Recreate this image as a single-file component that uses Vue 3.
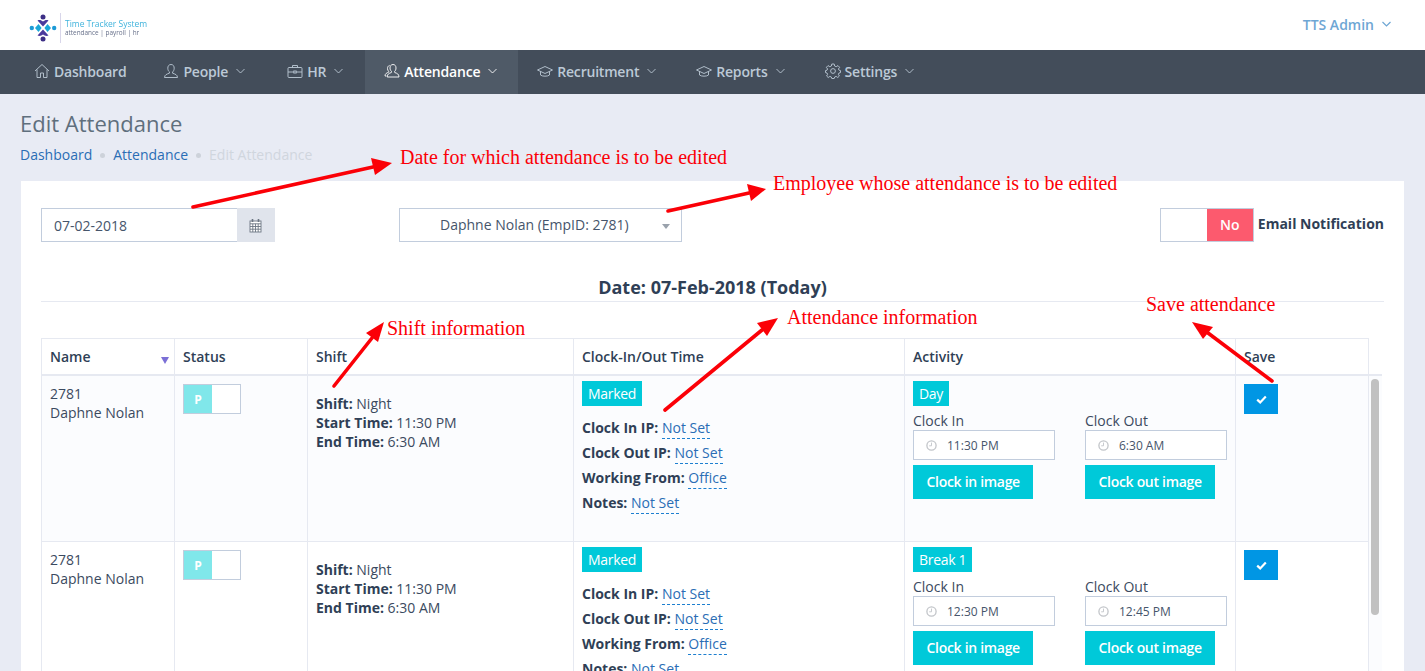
<script setup>
const navItems = [
  { label: 'Dashboard', icon: 'home', caret: false },
  { label: 'People', icon: 'user', caret: true },
  { label: 'HR', icon: 'case', caret: true },
  { label: 'Attendance', icon: 'users', caret: true, active: true },
  { label: 'Recruitment', icon: 'cap', caret: true },
  { label: 'Reports', icon: 'cap', caret: true },
  { label: 'Settings', icon: 'gear', caret: true },
]
const rows = [
  { activity: 'Day', inTime: '11:30 PM', outTime: '6:30 AM' },
  { activity: 'Break 1', inTime: '12:30 PM', outTime: '12:45 PM' },
]
const clockFields = [
  { label: 'Clock In IP:', value: 'Not Set' },
  { label: 'Clock Out IP:', value: 'Not Set' },
  { label: 'Working From:', value: 'Office' },
  { label: 'Notes:', value: 'Not Set' },
]
const arrows = [
  { x1: 193, y1: 207, x2: 373, y2: 167, tip: '392,163 371,158 375,175' },
  { x1: 668, y1: 211, x2: 749, y2: 193, tip: '766,189 747,184 751,201' },
  { x1: 334, y1: 386, x2: 372, y2: 338, tip: '384,322 366,333 378,342' },
  { x1: 665, y1: 410, x2: 762, y2: 330, tip: '778,318 757,323 767,336' },
  { x1: 1272, y1: 381, x2: 1208, y2: 333, tip: '1192,322 1203,339 1213,327' },
]
const notes = [
  { text: 'Date for which attendance is to be edited', cls: 'n1' },
  { text: 'Employee whose attendance is to be edited', cls: 'n2' },
  { text: 'Shift information', cls: 'n3' },
  { text: 'Attendance information', cls: 'n4' },
  { text: 'Save attendance', cls: 'n5' },
]
</script>

<template>
  <div class="page">
    <header class="top">
      <div class="logo">
        <svg class="logo-mark" width="28" height="28" viewBox="0 0 28 28">
          <circle cx="14" cy="3" r="2.5" fill="#3d2f86" />
          <circle cx="14" cy="25" r="2.5" fill="#3d2f86" />
          <path d="M8.5 6.5 C10.5 5.5 12.5 6.3 14 7.5 C15.5 6.3 17.5 5.5 19.5 6.5 L14 12.5 Z" fill="#4a3a9c" />
          <path d="M8.5 21.5 C10.5 22.5 12.5 21.7 14 20.5 C15.5 21.7 17.5 22.5 19.5 21.5 L14 15.5 Z" fill="#4a3a9c" />
          <circle cx="2.8" cy="14" r="2.2" fill="#1d9ad6" />
          <circle cx="25.2" cy="14" r="2.2" fill="#1d9ad6" />
          <path d="M6 14 L9.5 10 L12.6 14 L9.5 18 Z M22 14 L18.5 10 L15.4 14 L18.5 18 Z" fill="#1aa7d8" />
        </svg>
        <span class="logo-rule"></span>
        <div class="logo-text">
          <div class="logo-t1">Time Tracker System</div>
          <div class="logo-t2">attendance | payroll | hr</div>
        </div>
      </div>
      <div class="account">
        <span>TTS Admin</span>
        <svg width="9" height="6" viewBox="0 0 9 6"><path d="M.5 1 L4.5 5 L8.5 1" fill="none" stroke="currentColor" stroke-width="1.2" /></svg>
      </div>
    </header>

    <nav class="nav">
      <a v-for="item in navItems" :key="item.label" class="nav-item" :class="[item.icon, { active: item.active, first: item.label === 'Recruitment' }]">
        <svg class="nav-icon" width="16" height="16" viewBox="0 0 16 16" fill="none" stroke="currentColor" stroke-width="0.9">
          <template v-if="item.icon === 'home'">
            <path d="M1 8 L8 1.5 L15 8" /><path d="M3 6.5 V14.5 H6.5 V10 H9.5 V14.5 H13 V6.5" />
          </template>
          <template v-else-if="item.icon === 'user'">
            <path d="M8 1.5 C5.8 1.5 4.8 3.2 4.8 5.2 C4.8 7 5.6 8.3 6.5 9 L6.3 10.3 C4 11 1.5 11.8 1.5 14.5 H14.5 C14.5 11.8 12 11 9.7 10.3 L9.5 9 C10.4 8.3 11.2 7 11.2 5.2 C11.2 3.2 10.2 1.5 8 1.5 Z" />
          </template>
          <template v-else-if="item.icon === 'case'">
            <rect x="1" y="4.5" width="14" height="10" rx="1" /><path d="M5.5 4.5 V2.5 H10.5 V4.5" /><path d="M1 9 H6.8 M9.2 9 H15" /><rect x="6.8" y="8" width="2.4" height="2" />
          </template>
          <template v-else-if="item.icon === 'users'">
            <path d="M9 1.5 C7 1.5 6 3 6 5 C6 6.6 6.7 7.8 7.5 8.4 L7.3 9.6 C5.2 10.2 3.2 11 3.2 14 H15 C15 11 12.9 10.2 10.8 9.6 L10.6 8.4 C11.4 7.8 12 6.6 12 5 C12 3 11 1.5 9 1.5 Z" /><path d="M5.6 2.4 C4.2 2.8 3.5 4 3.5 5.5 C3.5 6.8 4 7.7 4.7 8.3 L4.5 9.3 C2.8 9.8 1 10.6 1 13 H2.4" />
          </template>
          <template v-else-if="item.icon === 'cap'">
            <path d="M8 3.5 L15.5 7 L8 10.5 L.5 7 Z" /><path d="M3.5 8.5 V12 C5 13.6 11 13.6 12.5 12 V8.5" />
          </template>
          <template v-else>
            <circle cx="8" cy="8" r="2.4" />
            <path d="M6.8 1 H9.2 L9.6 3 L11.2 3.7 L13 2.6 L14.6 4.3 L13.4 6 L14.1 7.2 L15.5 7.6 V9.6 L14 10 L13.4 11.3 L14.4 13 L12.8 14.5 L11.1 13.4 L9.7 14 L9.2 15.5 H6.8 L6.3 14 L4.9 13.4 L3.2 14.5 L1.6 13 L2.6 11.3 L2 10 L.5 9.6 V7.6 L2 7.2 L2.6 6 L1.4 4.3 L3 2.6 L4.8 3.7 L6.4 3 Z" />
          </template>
        </svg>
        <span>{{ item.label }}</span>
        <svg v-if="item.caret" class="nav-caret" width="9" height="6" viewBox="0 0 9 6"><path d="M.5 1 L4.5 5 L8.5 1" fill="none" stroke="currentColor" stroke-width="0.9" /></svg>
      </a>
    </nav>

    <main class="content">
      <h1 class="title">Edit Attendance</h1>
      <div class="crumbs">
        <a>Dashboard</a><i></i><a>Attendance</a><i></i><span>Edit Attendance</span>
      </div>

      <section class="card">
        <div class="filters">
          <div class="date-group">
            <div class="date-input">07-02-2018</div>
            <div class="date-addon">
              <svg width="13" height="15" viewBox="0 0 13 15" fill="none" stroke="#6c7683" stroke-width="0.9">
                <rect x="1" y="3" width="11" height="11" fill="#fff" />
                <path d="M1 5.8 H12 M1 8.5 H12 M1 11.2 H12 M3.8 5.8 V14 M6.5 5.8 V14 M9.2 5.8 V14" />
                <path d="M3.5 1 V4 M9.5 1 V4" stroke-width="1.6" />
              </svg>
            </div>
          </div>
          <div class="select">
            <span>Daphne Nolan (EmpID: 2781)</span>
            <i class="select-arrow"></i>
          </div>
          <div class="email">
            <div class="switch"><span class="switch-off"></span><span class="switch-on">No</span></div>
            <strong>Email Notification</strong>
          </div>
        </div>

        <h3 class="date-heading">Date: 07-Feb-2018 (Today)</h3>

        <div class="table">
          <div class="thead">
            <div class="th th-name">Name<i class="sort"></i></div>
            <div class="th">Status</div>
            <div class="th">Shift</div>
            <div class="th">Clock-In/Out Time</div>
            <div class="th">Activity</div>
            <div class="th">Save</div>
          </div>
          <div class="tbody">
            <div v-for="(row, i) in rows" :key="i" class="tr" :class="{ odd: i === 0 }">
              <div class="td">2781<br />Daphne Nolan</div>
              <div class="td">
                <div class="p-switch"><span class="p-on">P</span></div>
              </div>
              <div class="td shift">
                <b>Shift:</b> Night<br />
                <b>Start Time:</b> 11:30 PM<br />
                <b>End Time:</b> 6:30 AM
              </div>
              <div class="td clock">
                <span class="tag">Marked</span>
                <div class="fields">
                  <div v-for="f in clockFields" :key="f.label" class="field">
                    <b>{{ f.label }}</b> <a class="editable">{{ f.value }}</a>
                  </div>
                </div>
              </div>
              <div class="td activity">
                <span class="tag">{{ row.activity }}</span>
                <div class="times">
                  <div class="time-col">
                    <label>Clock In</label>
                    <div class="time-input">
                      <svg width="11" height="11" viewBox="0 0 11 11" fill="none" stroke="#c2c5c9" stroke-width="1.3"><circle cx="5.5" cy="5.5" r="4.6" /><path d="M5.5 2.6 V5.8 H3.2" stroke-width="0.9" /></svg>
                      <span>{{ row.inTime }}</span>
                    </div>
                    <button class="img-btn">Clock in image</button>
                  </div>
                  <div class="time-col">
                    <label>Clock Out</label>
                    <div class="time-input">
                      <svg width="11" height="11" viewBox="0 0 11 11" fill="none" stroke="#c2c5c9" stroke-width="1.3"><circle cx="5.5" cy="5.5" r="4.6" /><path d="M5.5 2.6 V5.8 H3.2" stroke-width="0.9" /></svg>
                      <span>{{ row.outTime }}</span>
                    </div>
                    <button class="img-btn">Clock out image</button>
                  </div>
                </div>
              </div>
              <div class="td save">
                <button class="save-btn">
                  <svg width="11" height="9" viewBox="0 0 11 9"><path d="M1.2 4.6 L4.2 7.4 L9.8 1.6" fill="none" stroke="#fff" stroke-width="2.2" /></svg>
                </button>
              </div>
            </div>
            <div class="scroll-track"><div class="scroll-thumb"></div></div>
          </div>
        </div>
      </section>
    </main>

    <svg class="arrows" width="1425" height="671" viewBox="0 0 1425 671">
      <g v-for="(a, i) in arrows" :key="i">
        <line :x1="a.x1" :y1="a.y1" :x2="a.x2" :y2="a.y2" stroke="#fb0007" stroke-width="3.6" stroke-linecap="round" />
        <polygon :points="a.tip" fill="#fb0007" />
      </g>
    </svg>
    <span v-for="n in notes" :key="n.cls" class="note" :class="n.cls">{{ n.text }}</span>
  </div>
</template>

<style>
html, body { margin: 0; overflow: hidden; }
</style>

<style scoped>
.page {
  position: relative;
  height: 671px;
  overflow: hidden;
  background: #e8ebf4;
  font-family: "Open Sans", "Noto Sans", sans-serif;
  font-size: 14px;
  color: #2f3f56;
}
.top {
  height: 50px;
  box-sizing: border-box;
  background: #fff;
  display: flex;
  align-items: center;
  justify-content: space-between;
  padding: 0 34px 2px 29px;
}
.logo { display: flex; align-items: center; margin-top: 8px; }
.logo-mark { filter: blur(0.3px); }
.logo-rule { width: 1px; height: 30px; background: #d8d6ea; margin: 0 4px 0 3px; }
.logo-text { line-height: 9px; white-space: nowrap; filter: blur(0.25px); }
.logo-t1 { font-size: 8.5px; color: #3fb3dc; }
.logo-t2 { font-size: 6.4px; color: #67708a; }
.account { display: flex; align-items: center; gap: 8px; color: #6ea6d4; font-weight: 600; }
.nav {
  height: 44px;
  box-sizing: border-box;
  padding: 0 0 0 14px;
  background: #434d5a;
  display: flex;
}
.nav-item {
  display: flex;
  align-items: center;
  padding: 0 20px 2px;
  color: #bcc9d6;
  font-weight: 600;
  letter-spacing: -0.2px;
  white-space: nowrap;
}
.nav-item.home { padding-right: 17px; }
.nav-item.user { padding-right: 22px; }
.nav-item.case { padding-right: 22px; }
.nav-item.first { padding-left: 19px; }
.nav-icon { margin-right: 4px; }
.nav-caret { margin-left: 8px; }
.nav-item.active { background: #4f5a67; color: #fff; padding-left: 19px; padding-right: 21px; }
.content { padding: 0 21px; }
.title {
  margin: 0 0 0 -1px;
  padding-top: 14px;
  font-size: 22px;
  line-height: 30px;
  font-weight: 400;
  color: #5f6f7d;
}
.crumbs {
  display: flex;
  align-items: center;
  height: 22px;
  margin: 5px 0 0 -1px;
  color: #d0d6de;
}
.crumbs a { color: #2a6db5; }
.crumbs i { width: 5px; height: 5px; border-radius: 50%; background: #cdd2da; margin: 2px 8px 0; }
.card {
  margin-top: 16px;
  background: #fff;
  padding: 27px 20px 0;
  height: 490px;
  box-sizing: border-box;
}
.filters { display: flex; height: 34px; align-items: stretch; }
.date-group { width: 234px; display: flex; }
.date-input {
  flex: 1;
  border: 1px solid #c2cddd;
  border-right: 0;
  padding-left: 12px;
  display: flex;
  align-items: center;
  color: #46556b;
}
.date-addon {
  width: 38px;
  box-sizing: border-box;
  padding-right: 2px;
  background: #e0e4ec;
  display: flex;
  align-items: center;
  justify-content: center;
}
.select {
  position: relative;
  margin-left: 124px;
  width: 283px;
  box-sizing: border-box;
  border: 1px solid #c2cddd;
  display: flex;
  align-items: center;
  padding-left: 40px;
  color: #46556b;
  padding-bottom: 2px;
}
.select-arrow {
  position: absolute;
  right: 11px;
  top: 15px;
  border: 4px solid transparent;
  border-top: 5px solid #9aa2ac;
  border-bottom: 0;
}
.email { margin-left: auto; display: flex; align-items: center; gap: 4px; color: #2f3f56; }
.email strong { font-weight: 700; font-size: 14px; position: relative; top: -2px; }
.switch {
  width: 94px;
  height: 34px;
  box-sizing: border-box;
  border: 1px solid #c2cddd;
  display: flex;
}
.switch-off { flex: 1; }
.switch-on {
  width: 46px;
  padding-bottom: 2px;
  box-sizing: border-box;
  background: #fc5a6e;
  color: #fff;
  font-weight: 600;
  display: flex;
  align-items: center;
  justify-content: center;
}
.date-heading {
  margin: 32px 0 0;
  height: 27px;
  line-height: 26px;
  border-bottom: 1px solid #e6e9f1;
  text-align: center;
  font-size: 18px;
  font-weight: 700;
  color: #2f3f56;
}
.table { margin-top: 36px; }
.thead, .tr {
  display: grid;
  grid-template-columns: 133px 133px 266px 331px 331px 134px;
  width: 1328px;
}
.thead { height: 38px; border-top: 1px solid #e6e9f1; border-bottom: 2px solid #e6e9f1; box-sizing: border-box; }
.th {
  position: relative;
  border-left: 1px solid #e6e9f1;
  padding: 8px 8px 0;
  font-weight: 600;
  color: #2f3f56;
}
.th:last-child { border-right: 1px solid #e6e9f1; }
.sort {
  position: absolute;
  right: 5px;
  top: 18px;
  border: 4px solid transparent;
  border-top: 7px solid #7b6fd6;
  border-bottom: 0;
}
.tbody { position: relative; width: 1341px; }
.tr { height: 166px; border-bottom: 1px solid #e6e9f1; box-sizing: border-box; }
.tr.odd { background: #fbfcfe; }
.td {
  border-left: 1px solid #e6e9f1;
  padding: 8px 8px 0;
  line-height: 19px;
  color: #3b4a60;
  box-sizing: border-box;
}
.td:last-child { border-right: 1px solid #e6e9f1; }
.td b { font-weight: 700; color: #2f3f56; }
.p-switch {
  width: 58px;
  height: 30px;
  box-sizing: border-box;
  border: 1px solid #c2cddd;
  background: #fff;
}
.p-on {
  display: flex;
  width: 28px;
  height: 28px;
  background: #80e7ea;
  color: #fff;
  font-size: 12px;
  font-weight: 700;
  align-items: center;
  justify-content: center;
}
.shift { padding-top: 18px; }
.tag {
  display: inline-block;
  height: 25px;
  line-height: 25px;
  padding: 0 6px;
  letter-spacing: -0.3px;
  background: #00c9d9;
  color: #fff;
}
.clock { padding-top: 5px; }
.fields { margin-top: 9px; }
.field { height: 25px; line-height: 25px; white-space: nowrap; }
.editable {
  color: #2a6db5;
  border-bottom: 1px dashed #1d7fd0;
  padding-bottom: 1px;
}
.activity { padding-top: 5px; }
.times { display: flex; margin-top: 5px; }
.time-col { flex: none; width: 172px; }
.time-col + .time-col { width: 142px; }
.time-col label { display: block; line-height: 20px; color: #3b4a60; }
.time-input {
  width: 142px;
  height: 30px;
  box-sizing: border-box;
  border: 1px solid #c2cddd;
  background: #fff;
  display: flex;
  align-items: center;
  gap: 10px;
  padding-left: 12px;
  font-size: 12px;
  color: #46556b;
  margin-top: -1px;
}
.img-btn {
  display: block;
  margin-top: 5px;
  height: 34px;
  padding: 0 13.5px 2px;
  border: 0;
  background: #00c9d9;
  color: #fff;
  letter-spacing: -0.3px;
  font: 600 14px "Open Sans", "Noto Sans", sans-serif;
  white-space: nowrap;
}
.save { padding-top: 8px; }
.save-btn {
  display: flex;
  align-items: center;
  justify-content: center;
  width: 34px;
  height: 30px;
  border: 0;
  padding: 0;
  background: #0096e4;
}
.scroll-track {
  position: absolute;
  left: 1328px;
  top: -2px;
  bottom: 0;
  width: 13px;
  border-top: 2px solid #e6e9f1;
  background: #fbfcfe;
}
.scroll-thumb {
  position: absolute;
  left: 2px;
  top: 3px;
  width: 8px;
  height: 236px;
  border-radius: 4px;
  background: #c1c1c1;
}
.arrows { position: absolute; left: 0; top: 0; pointer-events: none; }
.note {
  position: absolute;
  font-family: "Liberation Serif", "Times New Roman", serif;
  font-size: 20px;
  line-height: 22px;
  color: #fb0007;
  white-space: nowrap;
}
.n1 { left: 400px; top: 146px; }
.n2 { left: 773px; top: 172px; }
.n3 { left: 387px; top: 317px; }
.n4 { left: 787px; top: 306px; }
.n5 { left: 1146px; top: 293px; }
</style>
